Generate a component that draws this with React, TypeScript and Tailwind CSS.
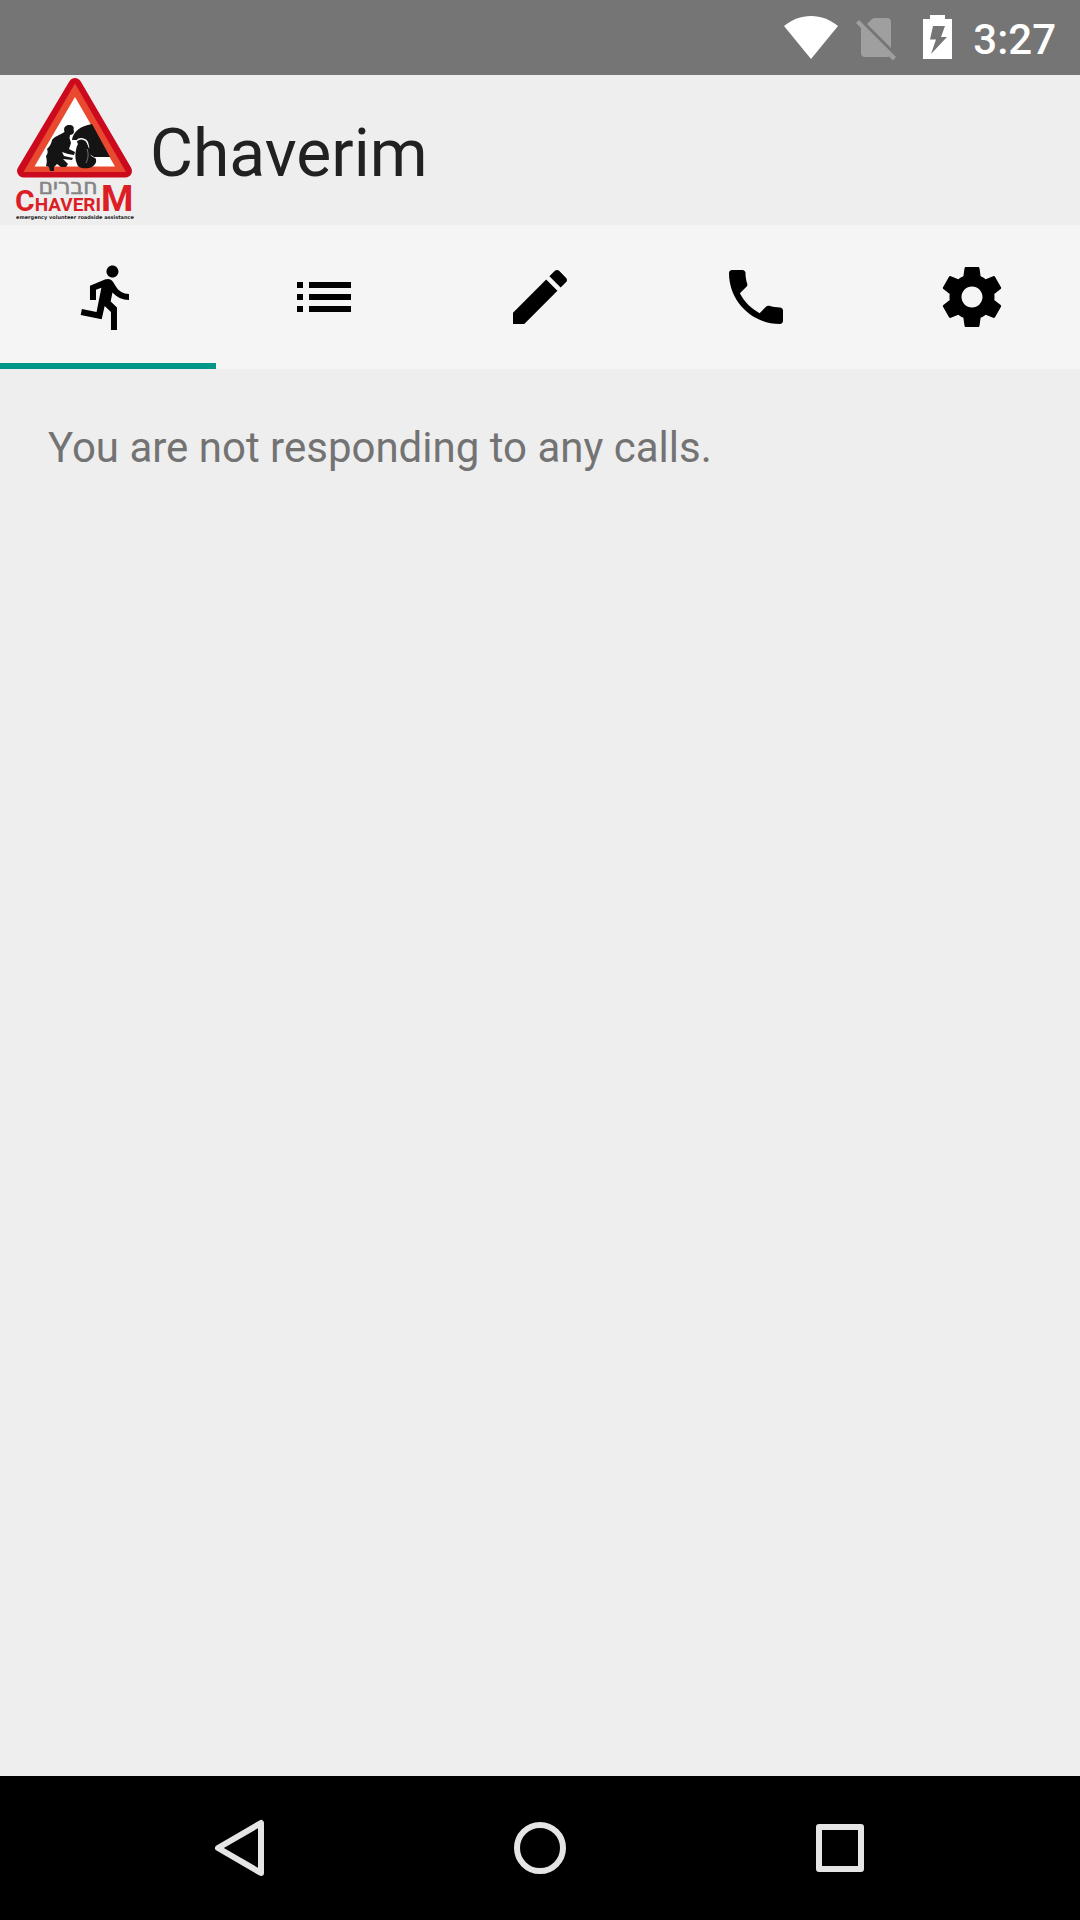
import { useState } from "react";

const tabs = [
  {
    id: "responding",
    label: "Responding",
    path: "M13.49 5.48c1.1 0 2-.9 2-2s-.9-2-2-2-2 .9-2 2 .9 2 2 2zm-3.6 13.9l1-4.4 2.1 2v6h2v-7.5l-2.1-2 .6-3c1.3 1.5 3.3 2.5 5.5 2.5v-2c-1.9 0-3.5-1-4.3-2.4l-1-1.6c-.4-.6-1-1-1.7-1-.3 0-.5.1-.8.1l-5.2 2.2v4.7h2v-3.4l1.8-.7-1.6 8.1-4.9-1-.4 2 7 1.4z",
  },
  {
    id: "calls",
    label: "Call list",
    path: "M3 13h2v-2H3v2zm0 4h2v-2H3v2zm0-8h2V7H3v2zm4 4h14v-2H7v2zm0 4h14v-2H7v2zM7 7v2h14V7H7z",
  },
  {
    id: "edit",
    label: "Edit",
    path: "M3 17.25V21h3.75L17.81 9.94l-3.75-3.75L3 17.25zM20.71 7.04c.39-.39.39-1.02 0-1.41l-2.34-2.34c-.39-.39-1.02-.39-1.41 0l-1.83 1.83 3.75 3.75 1.83-1.83z",
  },
  {
    id: "phone",
    label: "Phone",
    path: "M6.62 10.79c1.44 2.83 3.76 5.14 6.59 6.59l2.2-2.2c.27-.27.67-.36 1.02-.24 1.12.37 2.33.57 3.57.57.55 0 1 .45 1 1V20c0 .55-.45 1-1 1-9.39 0-17-7.61-17-17 0-.55.45-1 1-1h3.5c.55 0 1 .45 1 1 0 1.25.2 2.45.57 3.57.11.35.03.74-.25 1.02l-2.2 2.2z",
  },
  {
    id: "settings",
    label: "Settings",
    path: "M19.43 12.98c.04-.32.07-.64.07-.98s-.03-.66-.07-.98l2.11-1.65c.19-.15.24-.42.12-.64l-2-3.46c-.12-.22-.39-.3-.61-.22l-2.49 1c-.52-.4-1.08-.73-1.69-.98l-.38-2.65C14.46 2.18 14.25 2 14 2h-4c-.25 0-.46.18-.49.42l-.38 2.65c-.61.25-1.17.59-1.69.98l-2.49-1c-.23-.09-.49 0-.61.22l-2 3.46c-.13.22-.07.49.12.64l2.11 1.65c-.04.32-.07.65-.07.98s.03.66.07.98l-2.11 1.65c-.19.15-.24.42-.12.64l2 3.46c.12.22.39.3.61.22l2.49-1c.52.4 1.08.73 1.69.98l.38 2.65c.03.24.24.42.49.42h4c.25 0 .46-.18.49-.42l.38-2.65c.61-.25 1.17-.59 1.69-.98l2.49 1c.23.09.49 0 .61-.22l2-3.46c.12-.22.07-.49-.12-.64l-2.11-1.65zM12 15.5c-1.93 0-3.5-1.57-3.5-3.5s1.57-3.5 3.5-3.5 3.5 1.57 3.5 3.5-1.57 3.5-3.5 3.5z",
  },
];

function StatusBar() {
  return (
    <div className="flex h-[75px] items-center justify-end bg-[#757575] pr-6 text-white">
      <svg className="h-[75px] w-[54px]" viewBox="0 0 54 75" fill="currentColor" role="img" aria-label="Wi-Fi">
        <path d="M27 59L0 26C8 19.5 17 16 27 16s19 3.5 27 10z" />
      </svg>
      <svg className="ml-[18px] h-[75px] w-10" viewBox="0 0 40 75" fill="currentColor" role="img" aria-label="No SIM">
        <g opacity=".3">
          <path d="M11 24l4.500-4.500q1.500-1.500 3-1.500H31q4 0 4 4v26z" />
          <path d="M3 20l37 37-3 3.500-4-4q-1 .5-2 .5H9q-4 0-4-4V28l-5-5z" />
        </g>
      </svg>
      <svg className="ml-[27px] h-[75px] w-[29px]" viewBox="0 0 29 75" fill="currentColor" role="img" aria-label="Battery charging">
        <path fillRule="evenodd" d="M7 15h15v4h7v40H0V19h7zM10 26L7 39.500H13L8 54l16-17h-6l4-11z" />
      </svg>
      <time className="ml-[21px] pt-1 font-[Roboto,sans-serif] text-[42px] leading-[48px] font-medium">3:27</time>
    </div>
  );
}

function Logo() {
  return (
    <svg className="h-[150px] w-[120px] shrink-0" viewBox="15 5 120 150" role="img" aria-label="Chaverim logo">
      <path d="M75 14.500L125.500 101H23.500z" fill="#cc0a1e" stroke="#cc0a1e" strokeWidth="13" strokeLinejoin="round" />
      <path d="M75 13.500L126 102H23.500z" fill="#e9492e" />
      <path d="M75 27L115 96.500H34.500z" fill="#fff" />
      <path d="M72 70C73 62 80 56 92 54L110 87H94L80 78L76 70z" fill="#141414" />
      <path d="M76 82C73 70 79 68 83 69C88 70 89 76 88 82" fill="none" stroke="#fff" strokeWidth="1.500" />
      <path d="M76 80C77 74 79 72 83 72C88 72 89 78 90 84C92 88 95 87 96 89C97 94 93 97 89 98C83 99 78 98 77 94C75 90 75 84 76 80z" fill="#141414" />
      <path d="M87 79C89 84 88 89 86 93" fill="none" stroke="#777" strokeWidth="1" />
      <path
        d="M64.500 62C63 57 66 55 69 55C73 55 74.500 57 73.500 60C75 62 73 65 70 65L69.500 68L71 73L69 79L75 82L74 85L68 84L62 82L64 86L73 88L72 90L63 89L68 94L66 97L61 97L57 94L54 97L54 101L50 101L49 97L46 96C47 93 47 90 46 86C48 84 48 81 47 79C49 77 51 75 52 70C55 66 60 65 64.500 62z"
        fill="#141414"
      />
      <text x="15" y="141" fontFamily="Roboto, sans-serif" fontWeight="700" fill="#dc1f26">
        <tspan fontSize="30">C</tspan>
        <tspan fontSize="19">HAVERI</tspan>
        <tspan fontSize="37">M</tspan>
      </text>
      <text x="68" y="124" textAnchor="middle" fontFamily="'DejaVu Sans', sans-serif" fontSize="22" fill="#858585" stroke="#858585" strokeWidth=".6">
        חברים
      </text>
      <text x="75" y="149" textAnchor="middle" fontFamily="'DejaVu Sans', sans-serif" fontSize="5" fontWeight="700" fill="#222">
        emergency volunteer roadside assistance
      </text>
    </svg>
  );
}

function TabBar({ active, onSelect }: { active: string; onSelect: (id: string) => void }) {
  return (
    <nav className="grid h-36 grid-cols-5 bg-[#f5f5f5]">
      {tabs.map((tab) => (
        <button
          key={tab.id}
          type="button"
          aria-label={tab.label}
          aria-pressed={active === tab.id}
          onClick={() => onSelect(tab.id)}
          className={
            active === tab.id
              ? "flex items-center justify-center bg-linear-to-t from-[#009688] from-[6px] to-transparent to-[6px]"
              : "flex items-center justify-center"
          }
        >
          <svg className="size-[72px]" viewBox="0 0 24 24" fill="#000" aria-hidden="true">
            <path d={tab.path} />
          </svg>
        </button>
      ))}
    </nav>
  );
}

function NavigationBar() {
  return (
    <footer className="flex h-36 bg-black px-[90px] text-[#e5e5e5]">
      <button type="button" aria-label="Back" className="flex flex-1 items-center justify-center">
        <svg className="size-[60px]" viewBox="0 0 60 60" fill="none" stroke="currentColor" strokeWidth="6" strokeLinejoin="round">
          <path d="M51 5V55L8 30z" />
        </svg>
      </button>
      <button type="button" aria-label="Home" className="flex flex-1 items-center justify-center">
        <svg className="size-[60px]" viewBox="0 0 60 60" fill="none" stroke="currentColor" strokeWidth="6">
          <circle cx="30" cy="30" r="23" />
        </svg>
      </button>
      <button type="button" aria-label="Recent apps" className="flex flex-1 items-center justify-center">
        <svg className="size-[60px]" viewBox="0 0 60 60" fill="none" stroke="currentColor" strokeWidth="6" strokeLinejoin="round">
          <rect x="9" y="9" width="42" height="42" />
        </svg>
      </button>
    </footer>
  );
}

export default function App() {
  const [active, setActive] = useState("responding");
  return (
    <div className="flex min-h-screen flex-col bg-[#eeeeee] font-[Roboto,sans-serif]">
      <StatusBar />
      <header className="flex h-[150px] items-center gap-[15px] px-[15px]">
        <Logo />
        <h1 className="pt-2 text-[66px] leading-[78px] text-[#212121]">Chaverim</h1>
      </header>
      <TabBar active={active} onSelect={setActive} />
      <main className="flex-1 px-12 py-[49px]">
        <p className="text-[42px] leading-[60px] text-[#737373]">You are not responding to any calls.</p>
      </main>
      <NavigationBar />
    </div>
  );
}
